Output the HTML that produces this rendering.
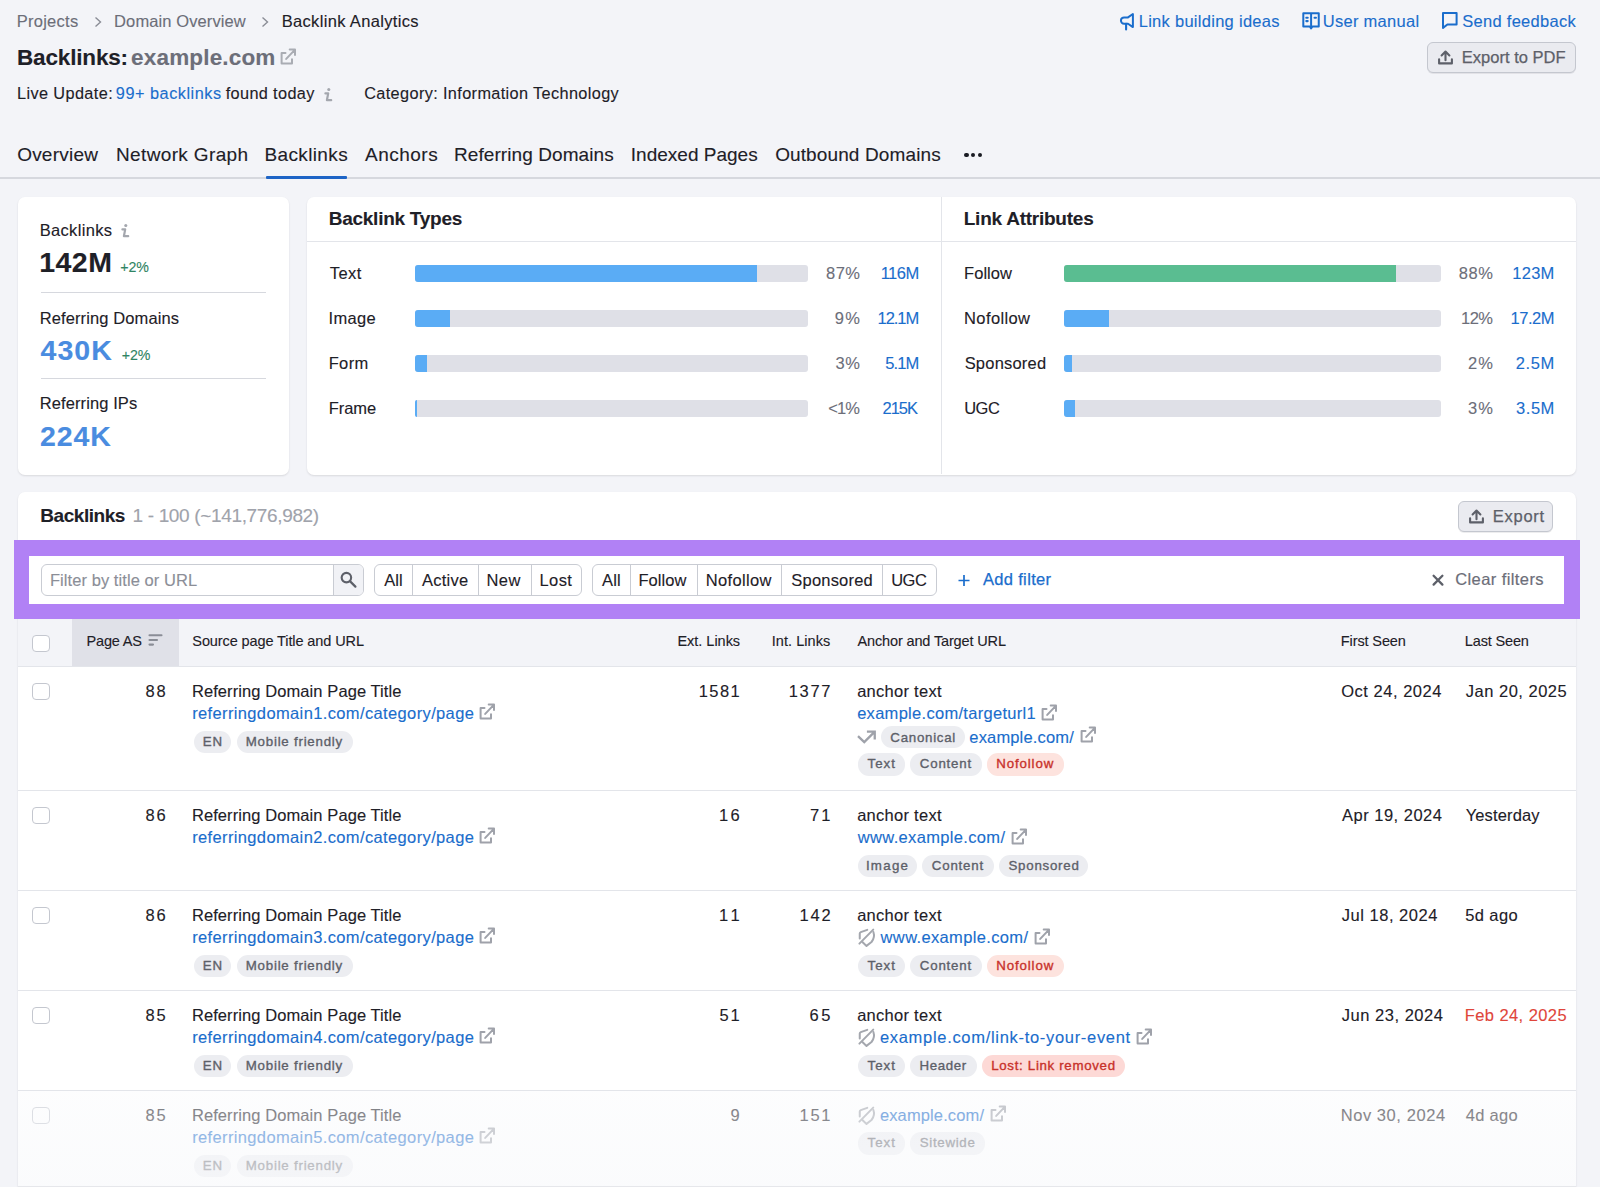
<!DOCTYPE html>
<html><head><meta charset="utf-8"><title>Backlinks</title>
<style>
html,body{margin:0;padding:0;}
body{width:1600px;height:1187px;overflow:hidden;position:relative;background:#f3f4f8;font-family:"Liberation Sans",sans-serif;}
.t{position:absolute;white-space:nowrap;-webkit-text-stroke:0.12px currentColor;}
.r{position:absolute;display:block;}
</style></head><body>
<div class="t" style="left:16.68px;top:11.38px;font-size:16.5px;line-height:21px;color:#6c6e79;letter-spacing:0.276px;">Projects</div>
<svg class="r" style="left:92px;top:15px;" width="12" height="14" viewBox="0 0 12 14"><path d="M3.5 2.5 L8.5 7 L3.5 11.5" fill="none" stroke="#8a8d96" stroke-width="1.4"/></svg>
<div class="t" style="left:114.08px;top:11.38px;font-size:16.5px;line-height:21px;color:#6c6e79;letter-spacing:0.104px;">Domain Overview</div>
<svg class="r" style="left:259px;top:15px;" width="12" height="14" viewBox="0 0 12 14"><path d="M3.5 2.5 L8.5 7 L3.5 11.5" fill="none" stroke="#8a8d96" stroke-width="1.4"/></svg>
<div class="t" style="left:281.68px;top:11.38px;font-size:16.5px;line-height:21px;color:#1e2027;letter-spacing:0.337px;">Backlink Analytics</div>
<div class="t" style="left:17.04px;top:43.70px;font-size:22.5px;line-height:28px;color:#1e2027;font-weight:700;letter-spacing:-0.168px;">Backlinks:</div>
<div class="t" style="left:131.10px;top:43.70px;font-size:22.5px;line-height:28px;color:#6c6e79;font-weight:700;letter-spacing:0.171px;">example.com</div>
<svg class="r" style="left:279.5px;top:48px;" width="17" height="17" viewBox="0 0 17 17"><path d="M5.5 5.1H1.6V15.5H12V11.2" fill="none" stroke="#a9acb3" stroke-width="2" stroke-linecap="round" stroke-linejoin="round"/><path d="M6.2 10.9L15 1.6M9.7 1.6H15V6.9" fill="none" stroke="#a9acb3" stroke-width="2" stroke-linecap="round" stroke-linejoin="round"/></svg>
<div class="t" style="left:17.00px;top:83.35px;font-size:16.3px;line-height:20px;color:#1e2027;letter-spacing:0.386px;">Live Update:</div>
<div class="t" style="left:115.87px;top:83.35px;font-size:16.3px;line-height:20px;color:#1a6dcc;letter-spacing:0.510px;">99+ backlinks</div>
<div class="t" style="left:225.76px;top:83.35px;font-size:16.3px;line-height:20px;color:#1e2027;letter-spacing:0.348px;">found today</div>
<svg class="r" style="left:321.2px;top:86px;" width="13" height="17" viewBox="0 0 13 17"><circle cx="7.8" cy="3.5" r="1.55" fill="#a4a7ae"/><path d="M4.4 7.4H7.2L5.9 14.2H10.2" fill="none" stroke="#a4a7ae" stroke-width="2.2" stroke-linecap="round" stroke-linejoin="round"/></svg>
<div class="t" style="left:364.19px;top:83.35px;font-size:16.3px;line-height:20px;color:#1e2027;letter-spacing:0.367px;">Category: Information Technology</div>
<svg class="r" style="left:1118px;top:12px;" width="18" height="20" viewBox="0 0 18 20"><path d="M6.1 5.4H10L14.9 2V15.1L10 11.75H6.1A3.17 3.17 0 0 1 6.1 5.4Z" fill="none" stroke="#1a6dcc" stroke-width="2" stroke-linejoin="round"/><path d="M8.1 11.9V17.4" stroke="#1a6dcc" stroke-width="2.1" stroke-linecap="round"/></svg>
<div class="t" style="left:1138.68px;top:11.18px;font-size:16.5px;line-height:21px;color:#1a6dcc;letter-spacing:0.283px;">Link building ideas</div>
<svg class="r" style="left:1301px;top:11px;" width="20" height="20" viewBox="0 0 20 20"><path d="M2.3 2.3H17.75V15.5H11.4L10.1 17.4L8.8 15.5H2.3Z" fill="none" stroke="#1a6dcc" stroke-width="2" stroke-linejoin="round"/><path d="M10.1 2.5V16.5" stroke="#1a6dcc" stroke-width="2"/><path d="M5.3 6.75H6.7M5.3 10.1H6.7M13.55 6.75H14.95" stroke="#1a6dcc" stroke-width="2.1" stroke-linecap="round"/></svg>
<div class="t" style="left:1322.76px;top:11.18px;font-size:16.5px;line-height:21px;color:#1a6dcc;letter-spacing:0.284px;">User manual</div>
<svg class="r" style="left:1441px;top:11px;" width="18" height="19" viewBox="0 0 18 19"><path d="M2 2V16.9L6.4 13.5H15.6V2Z" fill="none" stroke="#1a6dcc" stroke-width="2" stroke-linejoin="round"/></svg>
<div class="t" style="left:1462.26px;top:11.18px;font-size:16.5px;line-height:21px;color:#1a6dcc;letter-spacing:0.282px;">Send feedback</div>
<div class="r" style="left:1427px;top:42px;width:149px;height:31.3px;background:#eaebf0;border:1px solid #c4c7cf;border-radius:6px;box-sizing:border-box;box-shadow:0 1px 0 rgba(25,27,35,.08);"></div>
<svg class="r" style="left:1437px;top:49px;" width="17" height="17" viewBox="0 0 17 17"><path d="M8.5 11.3V2.8M4.6 6.4L8.5 2.5L12.4 6.4" fill="none" stroke="#5d6069" stroke-width="2.1" stroke-linecap="round" stroke-linejoin="round"/><path d="M2.1 10.2V14.4H14.9V10.2" fill="none" stroke="#5d6069" stroke-width="2.1" stroke-linecap="round" stroke-linejoin="round"/></svg>
<div class="t" style="left:1461.68px;top:47.28px;font-size:16.5px;line-height:21px;color:#5d6069;letter-spacing:0.030px;-webkit-text-stroke:0.25px #5d6069;">Export to PDF</div>
<div class="t" style="left:17.14px;top:142.91px;font-size:19px;line-height:24px;color:#1e2027;letter-spacing:0.232px;">Overview</div>
<div class="t" style="left:115.98px;top:142.91px;font-size:19px;line-height:24px;color:#1e2027;letter-spacing:0.365px;">Network Graph</div>
<div class="t" style="left:264.48px;top:142.91px;font-size:19px;line-height:24px;color:#1e2027;letter-spacing:0.364px;">Backlinks</div>
<div class="t" style="left:365.00px;top:142.91px;font-size:19px;line-height:24px;color:#1e2027;letter-spacing:0.489px;">Anchors</div>
<div class="t" style="left:453.98px;top:142.91px;font-size:19px;line-height:24px;color:#1e2027;letter-spacing:0.082px;">Referring Domains</div>
<div class="t" style="left:630.79px;top:142.91px;font-size:19px;line-height:24px;color:#1e2027;letter-spacing:0.012px;">Indexed Pages</div>
<div class="t" style="left:775.14px;top:142.91px;font-size:19px;line-height:24px;color:#1e2027;letter-spacing:0.122px;">Outbound Domains</div>
<div class="r" style="left:964.0px;top:152.6px;width:4.7px;height:4.7px;background:#191b23;border-radius:50%;"></div>
<div class="r" style="left:970.8px;top:152.6px;width:4.7px;height:4.7px;background:#191b23;border-radius:50%;"></div>
<div class="r" style="left:977.6px;top:152.6px;width:4.7px;height:4.7px;background:#191b23;border-radius:50%;"></div>
<div class="r" style="left:0px;top:177px;width:1600px;height:1.5px;background:#d6d8de;"></div>
<div class="r" style="left:266px;top:175.5px;width:81px;height:3.2px;background:#1d64c6;border-radius:1px;"></div>
<div class="r" style="left:18px;top:197px;width:271px;height:277.5px;background:#fff;border-radius:7px;box-shadow:0 1px 2px rgba(25,27,35,.12);"></div>
<div class="r" style="left:307px;top:197px;width:1269px;height:277.5px;background:#fff;border-radius:7px;box-shadow:0 1px 2px rgba(25,27,35,.12);"></div>
<div class="r" style="left:941px;top:197px;width:1px;height:277px;background:#e3e5ea;"></div>
<div class="r" style="left:307px;top:240.5px;width:1269px;height:1.2px;background:#e3e5ea;"></div>
<div class="t" style="left:39.68px;top:219.78px;font-size:16.5px;line-height:21px;color:#1e2027;letter-spacing:0.336px;">Backlinks</div>
<svg class="r" style="left:118px;top:222px;" width="13" height="17" viewBox="0 0 13 17"><circle cx="7.8" cy="3.5" r="1.55" fill="#a4a7ae"/><path d="M4.4 7.4H7.2L5.9 14.2H10.2" fill="none" stroke="#a4a7ae" stroke-width="2.2" stroke-linecap="round" stroke-linejoin="round"/></svg>
<div class="t" style="left:39.29px;top:244.12px;font-size:28.5px;line-height:36px;color:#1e2027;font-weight:700;letter-spacing:0.438px;">142M</div>
<div class="t" style="left:120.29px;top:258.08px;font-size:14.2px;line-height:18px;color:#2f8463;letter-spacing:-0.059px;">+2%</div>
<div class="r" style="left:41px;top:291.5px;width:225px;height:1.5px;background:#d6d8de;"></div>
<div class="t" style="left:39.68px;top:307.53px;font-size:16.5px;line-height:21px;color:#1e2027;letter-spacing:0.117px;">Referring Domains</div>
<div class="t" style="left:40.57px;top:331.82px;font-size:28.5px;line-height:36px;color:#4a8ce0;font-weight:700;letter-spacing:1.032px;">430K</div>
<div class="t" style="left:121.79px;top:345.78px;font-size:14.2px;line-height:18px;color:#2f8463;letter-spacing:-0.059px;">+2%</div>
<div class="r" style="left:41px;top:377.5px;width:225px;height:1.5px;background:#d6d8de;"></div>
<div class="t" style="left:39.68px;top:393.48px;font-size:16.5px;line-height:21px;color:#1e2027;letter-spacing:0.102px;">Referring IPs</div>
<div class="t" style="left:40.00px;top:418.12px;font-size:28.5px;line-height:36px;color:#4a8ce0;font-weight:700;letter-spacing:0.889px;">224K</div>
<div class="t" style="left:328.76px;top:207.41px;font-size:19px;line-height:24px;color:#1e2027;font-weight:700;letter-spacing:-0.262px;">Backlink Types</div>
<div class="t" style="left:963.76px;top:207.41px;font-size:19px;line-height:24px;color:#1e2027;font-weight:700;letter-spacing:-0.242px;">Link Attributes</div>
<div class="t" style="left:329.67px;top:262.98px;font-size:16.5px;line-height:21px;color:#1e2027;letter-spacing:0.489px;">Text</div>
<div class="r" style="left:415px;top:264.5px;width:393px;height:17.5px;background:#dfe0e7;border-radius:3px;"></div>
<div class="r" style="left:415px;top:264.5px;width:341.91px;height:17.5px;background:#5aacf5;border-radius:3px 0 0 3px;"></div>
<div class="t" style="left:825.94px;top:262.98px;font-size:16.5px;line-height:21px;color:#6c6e79;letter-spacing:0.519px;">87%</div>
<div class="t" style="left:880.66px;top:262.98px;font-size:16.5px;line-height:21px;color:#1a6dcc;letter-spacing:-0.518px;">116M</div>
<div class="t" style="left:328.51px;top:307.98px;font-size:16.5px;line-height:21px;color:#1e2027;letter-spacing:0.319px;">Image</div>
<div class="r" style="left:415px;top:309.5px;width:393px;height:17.5px;background:#dfe0e7;border-radius:3px;"></div>
<div class="r" style="left:415px;top:309.5px;width:35.37px;height:17.5px;background:#5aacf5;border-radius:3px 0 0 3px;"></div>
<div class="t" style="left:834.66px;top:307.98px;font-size:16.5px;line-height:21px;color:#6c6e79;letter-spacing:1.477px;">9%</div>
<div class="t" style="left:877.56px;top:307.98px;font-size:16.5px;line-height:21px;color:#1a6dcc;letter-spacing:-1.058px;">12.1M</div>
<div class="t" style="left:328.68px;top:352.98px;font-size:16.5px;line-height:21px;color:#1e2027;letter-spacing:0.355px;">Form</div>
<div class="r" style="left:415px;top:354.5px;width:393px;height:17.5px;background:#dfe0e7;border-radius:3px;"></div>
<div class="r" style="left:415px;top:354.5px;width:11.79px;height:17.5px;background:#5aacf5;border-radius:3px 0 0 3px;"></div>
<div class="t" style="left:835.42px;top:352.98px;font-size:16.5px;line-height:21px;color:#6c6e79;letter-spacing:0.712px;">3%</div>
<div class="t" style="left:885.24px;top:352.98px;font-size:16.5px;line-height:21px;color:#1a6dcc;letter-spacing:-0.917px;">5.1M</div>
<div class="t" style="left:328.68px;top:397.98px;font-size:16.5px;line-height:21px;color:#1e2027;letter-spacing:-0.026px;">Frame</div>
<div class="r" style="left:415px;top:399.5px;width:393px;height:17.5px;background:#dfe0e7;border-radius:3px;"></div>
<div class="r" style="left:415px;top:399.5px;width:2.3579999999999997px;height:17.5px;background:#5aacf5;border-radius:3px 0 0 3px;"></div>
<div class="t" style="left:828.27px;top:397.98px;font-size:16.5px;line-height:21px;color:#6c6e79;letter-spacing:-0.896px;">&lt;1%</div>
<div class="t" style="left:882.57px;top:397.98px;font-size:16.5px;line-height:21px;color:#1a6dcc;letter-spacing:-1.046px;">215K</div>
<div class="t" style="left:964.08px;top:262.98px;font-size:16.5px;line-height:21px;color:#1e2027;letter-spacing:0.031px;">Follow</div>
<div class="r" style="left:1064px;top:264.5px;width:377px;height:17.5px;background:#dfe0e7;border-radius:3px;"></div>
<div class="r" style="left:1064px;top:264.5px;width:331.76px;height:17.5px;background:#5abd91;border-radius:3px 0 0 3px;"></div>
<div class="t" style="left:1458.64px;top:262.98px;font-size:16.5px;line-height:21px;color:#6c6e79;letter-spacing:0.619px;">88%</div>
<div class="t" style="left:1512.36px;top:262.98px;font-size:16.5px;line-height:21px;color:#1a6dcc;letter-spacing:0.236px;">123M</div>
<div class="t" style="left:964.08px;top:307.98px;font-size:16.5px;line-height:21px;color:#1e2027;letter-spacing:0.380px;">Nofollow</div>
<div class="r" style="left:1064px;top:309.5px;width:377px;height:17.5px;background:#dfe0e7;border-radius:3px;"></div>
<div class="r" style="left:1064px;top:309.5px;width:45.24px;height:17.5px;background:#5aacf5;border-radius:3px 0 0 3px;"></div>
<div class="t" style="left:1461.06px;top:307.98px;font-size:16.5px;line-height:21px;color:#6c6e79;letter-spacing:-0.592px;">12%</div>
<div class="t" style="left:1510.56px;top:307.98px;font-size:16.5px;line-height:21px;color:#1a6dcc;letter-spacing:-0.508px;">17.2M</div>
<div class="t" style="left:964.66px;top:352.98px;font-size:16.5px;line-height:21px;color:#1e2027;letter-spacing:0.207px;">Sponsored</div>
<div class="r" style="left:1064px;top:354.5px;width:377px;height:17.5px;background:#dfe0e7;border-radius:3px;"></div>
<div class="r" style="left:1064px;top:354.5px;width:7.54px;height:17.5px;background:#5aacf5;border-radius:3px 0 0 3px;"></div>
<div class="t" style="left:1467.88px;top:352.98px;font-size:16.5px;line-height:21px;color:#6c6e79;letter-spacing:1.160px;">2%</div>
<div class="t" style="left:1515.77px;top:352.98px;font-size:16.5px;line-height:21px;color:#1a6dcc;letter-spacing:0.638px;">2.5M</div>
<div class="t" style="left:964.16px;top:397.98px;font-size:16.5px;line-height:21px;color:#1e2027;letter-spacing:-0.508px;">UGC</div>
<div class="r" style="left:1064px;top:399.5px;width:377px;height:17.5px;background:#dfe0e7;border-radius:3px;"></div>
<div class="r" style="left:1064px;top:399.5px;width:11.31px;height:17.5px;background:#5aacf5;border-radius:3px 0 0 3px;"></div>
<div class="t" style="left:1468.12px;top:397.98px;font-size:16.5px;line-height:21px;color:#6c6e79;letter-spacing:0.913px;">3%</div>
<div class="t" style="left:1516.02px;top:397.98px;font-size:16.5px;line-height:21px;color:#1a6dcc;letter-spacing:0.556px;">3.5M</div>
<div class="r" style="left:18px;top:492px;width:1558px;height:720px;background:#fff;border-radius:7px 7px 0 0;box-shadow:0 1px 2px rgba(25,27,35,.12);"></div>
<div class="t" style="left:40.37px;top:504.16px;font-size:19px;line-height:24px;color:#1e2027;font-weight:700;letter-spacing:-0.467px;">Backlinks</div>
<div class="t" style="left:132.57px;top:504.16px;font-size:19px;line-height:24px;color:#a0a3ab;letter-spacing:-0.345px;">1 - 100 (~141,776,982)</div>
<div class="r" style="left:1458px;top:501px;width:95px;height:31.3px;background:#eaebf0;border:1px solid #c4c7cf;border-radius:6px;box-sizing:border-box;box-shadow:0 1px 0 rgba(25,27,35,.08);"></div>
<svg class="r" style="left:1468px;top:508px;" width="17" height="17" viewBox="0 0 17 17"><path d="M8.5 11.3V2.8M4.6 6.4L8.5 2.5L12.4 6.4" fill="none" stroke="#5d6069" stroke-width="2.1" stroke-linecap="round" stroke-linejoin="round"/><path d="M2.1 10.2V14.4H14.9V10.2" fill="none" stroke="#5d6069" stroke-width="2.1" stroke-linecap="round" stroke-linejoin="round"/></svg>
<div class="t" style="left:1492.68px;top:506.28px;font-size:16.5px;line-height:21px;color:#5d6069;letter-spacing:0.760px;-webkit-text-stroke:0.25px #5d6069;">Export</div>
<div class="r" style="left:13.5px;top:540px;width:1566.5px;height:79px;background:#b181f5;"></div>
<div class="r" style="left:29px;top:556px;width:1535px;height:47.7px;background:#fff;"></div>
<div class="r" style="left:41px;top:564px;width:323px;height:32px;background:#fff;border:1px solid #c9ccd3;border-radius:6px;box-sizing:border-box;"></div>
<div class="r" style="left:333px;top:565px;width:30px;height:30px;background:#f1f2f6;border-left:1px solid #c9ccd3;border-radius:0 5px 5px 0;box-sizing:border-box;"></div>
<div class="t" style="left:49.88px;top:570.08px;font-size:16.5px;line-height:21px;color:#8b8e97;letter-spacing:0.073px;">Filter by title or URL</div>
<svg class="r" style="left:340px;top:571px;" width="18" height="17" viewBox="0 0 18 17"><circle cx="6.4" cy="6.6" r="4.75" fill="none" stroke="#5d6069" stroke-width="2.1"/><path d="M9.9 10.1L15.4 15.6" stroke="#5d6069" stroke-width="2.2" stroke-linecap="round"/></svg>
<div class="r" style="left:374px;top:564px;width:207.60000000000002px;height:32px;background:#fff;border:1px solid #c9ccd3;border-radius:6px;box-sizing:border-box;"></div>
<div class="r" style="left:411.6px;top:565px;width:1px;height:30px;background:#c9ccd3;"></div>
<div class="r" style="left:477.7px;top:565px;width:1px;height:30px;background:#c9ccd3;"></div>
<div class="r" style="left:530.8px;top:565px;width:1px;height:30px;background:#c9ccd3;"></div>
<div class="t" style="left:384.20px;top:570.08px;font-size:16.5px;line-height:21px;color:#1e2027;letter-spacing:0.129px;">All</div>
<div class="t" style="left:421.90px;top:570.08px;font-size:16.5px;line-height:21px;color:#1e2027;letter-spacing:0.256px;">Active</div>
<div class="t" style="left:486.38px;top:570.08px;font-size:16.5px;line-height:21px;color:#1e2027;letter-spacing:0.519px;">New</div>
<div class="t" style="left:539.38px;top:570.08px;font-size:16.5px;line-height:21px;color:#1e2027;letter-spacing:0.450px;">Lost</div>
<div class="r" style="left:592px;top:564px;width:344.6px;height:32px;background:#fff;border:1px solid #c9ccd3;border-radius:6px;box-sizing:border-box;"></div>
<div class="r" style="left:629.7px;top:565px;width:1px;height:30px;background:#c9ccd3;"></div>
<div class="r" style="left:696.7px;top:565px;width:1px;height:30px;background:#c9ccd3;"></div>
<div class="r" style="left:781.4px;top:565px;width:1px;height:30px;background:#c9ccd3;"></div>
<div class="r" style="left:881.7px;top:565px;width:1px;height:30px;background:#c9ccd3;"></div>
<div class="t" style="left:602.00px;top:570.08px;font-size:16.5px;line-height:21px;color:#1e2027;letter-spacing:0.129px;">All</div>
<div class="t" style="left:638.48px;top:570.08px;font-size:16.5px;line-height:21px;color:#1e2027;letter-spacing:0.071px;">Follow</div>
<div class="t" style="left:705.78px;top:570.08px;font-size:16.5px;line-height:21px;color:#1e2027;letter-spacing:0.337px;">Nofollow</div>
<div class="t" style="left:791.36px;top:570.08px;font-size:16.5px;line-height:21px;color:#1e2027;letter-spacing:0.194px;">Sponsored</div>
<div class="t" style="left:891.16px;top:570.08px;font-size:16.5px;line-height:21px;color:#1e2027;letter-spacing:-0.458px;">UGC</div>
<svg class="r" style="left:957px;top:574px;" width="14" height="13" viewBox="0 0 14 13"><path d="M7 1V12M1.5 6.5H12.5" stroke="#1a6dcc" stroke-width="1.7"/></svg>
<div class="t" style="left:982.90px;top:569.18px;font-size:16.5px;line-height:21px;color:#1a6dcc;letter-spacing:0.341px;-webkit-text-stroke:0.25px #1a6dcc;">Add filter</div>
<svg class="r" style="left:1430px;top:573px;" width="15" height="15" viewBox="0 0 15 15"><path d="M3.6 2.8L12.4 11.6M12.4 2.8L3.6 11.6" stroke="#5d6069" stroke-width="2.3" stroke-linecap="round"/></svg>
<div class="t" style="left:1455.17px;top:569.18px;font-size:16.5px;line-height:21px;color:#6c6e79;letter-spacing:0.416px;-webkit-text-stroke:0.2px #6c6e79;">Clear filters</div>
<div class="r" style="left:18px;top:619px;width:1558px;height:47px;background:#f3f4f8;"></div>
<div class="r" style="left:72.25px;top:619px;width:106.75px;height:47px;background:#e0e1e8;"></div>
<div class="r" style="left:18px;top:665.5px;width:1558px;height:1px;background:#e3e5ea;"></div>
<div class="r" style="left:32px;top:634.5px;width:17.5px;height:17.5px;background:#fff;border:1px solid #c4c7cf;border-radius:4px;box-sizing:border-box;opacity:1;"></div>
<div class="t" style="left:86.59px;top:631.87px;font-size:14.5px;line-height:18px;color:#1e2027;letter-spacing:-0.182px;">Page AS</div>
<svg class="r" style="left:147px;top:633px;" width="17" height="14" viewBox="0 0 17 14"><path d="M2.5 2.25H14.5M2.5 7H10M2.5 11.6H6" stroke="#8a8d96" stroke-width="2.1" stroke-linecap="round"/></svg>
<div class="t" style="left:192.35px;top:631.87px;font-size:14.5px;line-height:18px;color:#1e2027;letter-spacing:-0.104px;">Source page Title and URL</div>
<div class="t" style="left:677.44px;top:631.87px;font-size:14.5px;line-height:18px;color:#1e2027;letter-spacing:-0.021px;">Ext. Links</div>
<div class="t" style="left:771.70px;top:631.87px;font-size:14.5px;line-height:18px;color:#1e2027;letter-spacing:0.057px;">Int. Links</div>
<div class="t" style="left:857.50px;top:631.87px;font-size:14.5px;line-height:18px;color:#1e2027;letter-spacing:-0.140px;">Anchor and Target URL</div>
<div class="t" style="left:1340.84px;top:631.87px;font-size:14.5px;line-height:18px;color:#1e2027;letter-spacing:-0.113px;">First Seen</div>
<div class="t" style="left:1464.84px;top:631.87px;font-size:14.5px;line-height:18px;color:#1e2027;letter-spacing:-0.153px;">Last Seen</div>
<div class="r" style="left:18px;top:789.5px;width:1558px;height:1px;background:#e3e5ea;"></div>
<div class="r" style="left:32px;top:682.75px;width:17.5px;height:17.5px;background:#fff;border:1px solid #c4c7cf;border-radius:4px;box-sizing:border-box;opacity:1;"></div>
<div class="t" style="left:145.59px;top:681.08px;font-size:16.5px;line-height:21px;color:#1e2027;letter-spacing:1.755px;">88</div>
<div class="t" style="left:191.88px;top:681.08px;font-size:16.5px;line-height:21px;color:#1e2027;letter-spacing:0.090px;">Referring Domain Page Title</div>
<div class="t" style="left:192.13px;top:703.48px;font-size:16.5px;line-height:21px;color:#1a6dcc;letter-spacing:0.367px;">referringdomain1.com/category/page</div>
<svg class="r" style="left:479px;top:703px;" width="17" height="17" viewBox="0 0 17 17"><path d="M5.5 5.1H1.6V15.5H12V11.2" fill="none" stroke="#9fa2aa" stroke-width="2" stroke-linecap="round" stroke-linejoin="round"/><path d="M6.2 10.9L15 1.6M9.7 1.6H15V6.9" fill="none" stroke="#9fa2aa" stroke-width="2" stroke-linecap="round" stroke-linejoin="round"/></svg>
<div class="r" style="left:193.5px;top:730.6px;width:37.75px;height:22px;background:#ecedf1;border-radius:11px;"></div>
<div class="t" style="left:202.64px;top:732.59px;font-size:13.3px;line-height:17px;color:#5d6069;letter-spacing:0.907px;-webkit-text-stroke:0.35px #5d6069;">EN</div>
<div class="r" style="left:236.5px;top:730.6px;width:116.3px;height:22px;background:#ecedf1;border-radius:11px;"></div>
<div class="t" style="left:245.74px;top:732.59px;font-size:13.3px;line-height:17px;color:#5d6069;letter-spacing:0.770px;-webkit-text-stroke:0.35px #5d6069;">Mobile friendly</div>
<div class="t" style="left:698.76px;top:681.08px;font-size:16.5px;line-height:21px;color:#1e2027;letter-spacing:1.422px;">1581</div>
<div class="t" style="left:788.76px;top:681.08px;font-size:16.5px;line-height:21px;color:#1e2027;letter-spacing:1.683px;">1377</div>
<div class="t" style="left:1341.26px;top:681.08px;font-size:16.5px;line-height:21px;color:#1e2027;letter-spacing:0.517px;">Oct 24, 2024</div>
<div class="t" style="left:1465.75px;top:681.08px;font-size:16.5px;line-height:21px;color:#1e2027;letter-spacing:0.503px;">Jan 20, 2025</div>
<div class="t" style="left:857.14px;top:681.08px;font-size:16.5px;line-height:21px;color:#1e2027;letter-spacing:0.275px;">anchor text</div>
<div class="t" style="left:857.14px;top:703.48px;font-size:16.5px;line-height:21px;color:#1a6dcc;letter-spacing:0.294px;">example.com/targeturl1</div>
<svg class="r" style="left:1041px;top:703.6999999999999px;" width="17" height="17" viewBox="0 0 17 17"><path d="M5.5 5.1H1.6V15.5H12V11.2" fill="none" stroke="#9fa2aa" stroke-width="2" stroke-linecap="round" stroke-linejoin="round"/><path d="M6.2 10.9L15 1.6M9.7 1.6H15V6.9" fill="none" stroke="#9fa2aa" stroke-width="2" stroke-linecap="round" stroke-linejoin="round"/></svg>
<svg class="r" style="left:856px;top:729px;" width="20" height="15" viewBox="0 0 20 15"><path d="M2 7.1L8.25 13.1L18.75 2.6M10.9 2.6H18.75V10.5" fill="none" stroke="#9fa2aa" stroke-width="2.3" stroke-linejoin="miter"/></svg>
<div class="r" style="left:880.5px;top:726.25px;width:84px;height:22.2px;background:#ecedf1;border-radius:11px;"></div>
<div class="t" style="left:890.34px;top:729.09px;font-size:13.3px;line-height:17px;color:#5d6069;letter-spacing:0.726px;-webkit-text-stroke:0.35px #5d6069;">Canonical</div>
<div class="t" style="left:969.34px;top:726.58px;font-size:16.5px;line-height:21px;color:#1a6dcc;letter-spacing:0.154px;">example.com/</div>
<svg class="r" style="left:1079.5px;top:725.5px;" width="17" height="17" viewBox="0 0 17 17"><path d="M5.5 5.1H1.6V15.5H12V11.2" fill="none" stroke="#9fa2aa" stroke-width="2" stroke-linecap="round" stroke-linejoin="round"/><path d="M6.2 10.9L15 1.6M9.7 1.6H15V6.9" fill="none" stroke="#9fa2aa" stroke-width="2" stroke-linecap="round" stroke-linejoin="round"/></svg>
<div class="r" style="left:857.8px;top:753px;width:47px;height:22.5px;background:#ecedf1;border-radius:11px;"></div>
<div class="t" style="left:867.58px;top:755.39px;font-size:13.3px;line-height:17px;color:#5d6069;letter-spacing:0.964px;-webkit-text-stroke:0.35px #5d6069;">Text</div>
<div class="r" style="left:909.8px;top:753px;width:72px;height:22.5px;background:#ecedf1;border-radius:11px;"></div>
<div class="t" style="left:919.84px;top:755.39px;font-size:13.3px;line-height:17px;color:#5d6069;letter-spacing:0.797px;-webkit-text-stroke:0.35px #5d6069;">Content</div>
<div class="r" style="left:986.8px;top:753px;width:77px;height:22.5px;background:#fde3de;border-radius:11px;"></div>
<div class="t" style="left:996.19px;top:755.39px;font-size:13.3px;line-height:17px;color:#c8312a;letter-spacing:0.870px;-webkit-text-stroke:0.35px #c8312a;">Nofollow</div>
<div class="r" style="left:18px;top:889.5px;width:1558px;height:1px;background:#e3e5ea;"></div>
<div class="r" style="left:32px;top:806.75px;width:17.5px;height:17.5px;background:#fff;border:1px solid #c4c7cf;border-radius:4px;box-sizing:border-box;opacity:1;"></div>
<div class="t" style="left:145.59px;top:805.08px;font-size:16.5px;line-height:21px;color:#1e2027;letter-spacing:1.755px;">86</div>
<div class="t" style="left:191.88px;top:805.08px;font-size:16.5px;line-height:21px;color:#1e2027;letter-spacing:0.090px;">Referring Domain Page Title</div>
<div class="t" style="left:192.13px;top:827.48px;font-size:16.5px;line-height:21px;color:#1a6dcc;letter-spacing:0.367px;">referringdomain2.com/category/page</div>
<svg class="r" style="left:479px;top:827px;" width="17" height="17" viewBox="0 0 17 17"><path d="M5.5 5.1H1.6V15.5H12V11.2" fill="none" stroke="#9fa2aa" stroke-width="2" stroke-linecap="round" stroke-linejoin="round"/><path d="M6.2 10.9L15 1.6M9.7 1.6H15V6.9" fill="none" stroke="#9fa2aa" stroke-width="2" stroke-linecap="round" stroke-linejoin="round"/></svg>
<div class="t" style="left:719.06px;top:805.08px;font-size:16.5px;line-height:21px;color:#1e2027;letter-spacing:2.282px;">16</div>
<div class="t" style="left:810.12px;top:805.08px;font-size:16.5px;line-height:21px;color:#1e2027;letter-spacing:2.003px;">71</div>
<div class="t" style="left:1342.00px;top:805.08px;font-size:16.5px;line-height:21px;color:#1e2027;letter-spacing:0.495px;">Apr 19, 2024</div>
<div class="t" style="left:1465.67px;top:805.08px;font-size:16.5px;line-height:21px;color:#1e2027;letter-spacing:0.133px;">Yesterday</div>
<div class="t" style="left:857.14px;top:805.08px;font-size:16.5px;line-height:21px;color:#1e2027;letter-spacing:0.275px;">anchor text</div>
<div class="t" style="left:857.80px;top:827.48px;font-size:16.5px;line-height:21px;color:#1a6dcc;letter-spacing:0.337px;">www.example.com/</div>
<svg class="r" style="left:1011px;top:827.6999999999999px;" width="17" height="17" viewBox="0 0 17 17"><path d="M5.5 5.1H1.6V15.5H12V11.2" fill="none" stroke="#9fa2aa" stroke-width="2" stroke-linecap="round" stroke-linejoin="round"/><path d="M6.2 10.9L15 1.6M9.7 1.6H15V6.9" fill="none" stroke="#9fa2aa" stroke-width="2" stroke-linecap="round" stroke-linejoin="round"/></svg>
<div class="r" style="left:857.8px;top:854.4999999999999px;width:59px;height:22.5px;background:#ecedf1;border-radius:11px;"></div>
<div class="t" style="left:865.90px;top:856.89px;font-size:13.3px;line-height:17px;color:#5d6069;letter-spacing:1.289px;-webkit-text-stroke:0.35px #5d6069;">Image</div>
<div class="r" style="left:921.8px;top:854.4999999999999px;width:72px;height:22.5px;background:#ecedf1;border-radius:11px;"></div>
<div class="t" style="left:931.84px;top:856.89px;font-size:13.3px;line-height:17px;color:#5d6069;letter-spacing:0.797px;-webkit-text-stroke:0.35px #5d6069;">Content</div>
<div class="r" style="left:998.8px;top:854.4999999999999px;width:89.5px;height:22.5px;background:#ecedf1;border-radius:11px;"></div>
<div class="t" style="left:1008.45px;top:856.89px;font-size:13.3px;line-height:17px;color:#5d6069;letter-spacing:0.761px;-webkit-text-stroke:0.35px #5d6069;">Sponsored</div>
<div class="r" style="left:18px;top:989.5px;width:1558px;height:1px;background:#e3e5ea;"></div>
<div class="r" style="left:32px;top:906.75px;width:17.5px;height:17.5px;background:#fff;border:1px solid #c4c7cf;border-radius:4px;box-sizing:border-box;opacity:1;"></div>
<div class="t" style="left:145.59px;top:905.08px;font-size:16.5px;line-height:21px;color:#1e2027;letter-spacing:1.755px;">86</div>
<div class="t" style="left:191.88px;top:905.08px;font-size:16.5px;line-height:21px;color:#1e2027;letter-spacing:0.090px;">Referring Domain Page Title</div>
<div class="t" style="left:192.13px;top:927.48px;font-size:16.5px;line-height:21px;color:#1a6dcc;letter-spacing:0.367px;">referringdomain3.com/category/page</div>
<svg class="r" style="left:479px;top:927px;" width="17" height="17" viewBox="0 0 17 17"><path d="M5.5 5.1H1.6V15.5H12V11.2" fill="none" stroke="#9fa2aa" stroke-width="2" stroke-linecap="round" stroke-linejoin="round"/><path d="M6.2 10.9L15 1.6M9.7 1.6H15V6.9" fill="none" stroke="#9fa2aa" stroke-width="2" stroke-linecap="round" stroke-linejoin="round"/></svg>
<div class="r" style="left:193.5px;top:954.6px;width:37.75px;height:22px;background:#ecedf1;border-radius:11px;"></div>
<div class="t" style="left:202.64px;top:956.59px;font-size:13.3px;line-height:17px;color:#5d6069;letter-spacing:0.907px;-webkit-text-stroke:0.35px #5d6069;">EN</div>
<div class="r" style="left:236.5px;top:954.6px;width:116.3px;height:22px;background:#ecedf1;border-radius:11px;"></div>
<div class="t" style="left:245.74px;top:956.59px;font-size:13.3px;line-height:17px;color:#5d6069;letter-spacing:0.770px;-webkit-text-stroke:0.35px #5d6069;">Mobile friendly</div>
<div class="t" style="left:719.01px;top:905.08px;font-size:16.5px;line-height:21px;color:#1e2027;letter-spacing:3.652px;">11</div>
<div class="t" style="left:799.46px;top:905.08px;font-size:16.5px;line-height:21px;color:#1e2027;letter-spacing:1.795px;">142</div>
<div class="t" style="left:1341.75px;top:905.08px;font-size:16.5px;line-height:21px;color:#1e2027;letter-spacing:0.521px;">Jul 18, 2024</div>
<div class="t" style="left:1465.34px;top:905.08px;font-size:16.5px;line-height:21px;color:#1e2027;letter-spacing:0.366px;">5d ago</div>
<div class="t" style="left:857.14px;top:905.08px;font-size:16.5px;line-height:21px;color:#1e2027;letter-spacing:0.275px;">anchor text</div>
<svg class="r" style="left:850px;top:919.9999999999999px;" width="28" height="28" viewBox="0 0 28 28"><path d="M9.75 18.4V13.6Q9.75 12.6 10.8 12.1L17.25 9.9" fill="none" stroke="#a4a7ae" stroke-width="2" stroke-linecap="round"/><path d="M9.4 23.6L23.25 9.6" fill="none" stroke="#a4a7ae" stroke-width="2" stroke-linecap="round"/><path d="M23.4 12Q25.2 17.5 21.5 22L16.5 25.9L12.4 22.1" fill="none" stroke="#a4a7ae" stroke-width="2" stroke-linecap="round" stroke-linejoin="round"/></svg>
<div class="t" style="left:880.60px;top:927.48px;font-size:16.5px;line-height:21px;color:#1a6dcc;letter-spacing:0.350px;">www.example.com/</div>
<svg class="r" style="left:1034px;top:927.6999999999999px;" width="17" height="17" viewBox="0 0 17 17"><path d="M5.5 5.1H1.6V15.5H12V11.2" fill="none" stroke="#9fa2aa" stroke-width="2" stroke-linecap="round" stroke-linejoin="round"/><path d="M6.2 10.9L15 1.6M9.7 1.6H15V6.9" fill="none" stroke="#9fa2aa" stroke-width="2" stroke-linecap="round" stroke-linejoin="round"/></svg>
<div class="r" style="left:857.8px;top:954.4999999999999px;width:47px;height:22.5px;background:#ecedf1;border-radius:11px;"></div>
<div class="t" style="left:867.58px;top:956.89px;font-size:13.3px;line-height:17px;color:#5d6069;letter-spacing:0.964px;-webkit-text-stroke:0.35px #5d6069;">Text</div>
<div class="r" style="left:909.8px;top:954.4999999999999px;width:72px;height:22.5px;background:#ecedf1;border-radius:11px;"></div>
<div class="t" style="left:919.84px;top:956.89px;font-size:13.3px;line-height:17px;color:#5d6069;letter-spacing:0.797px;-webkit-text-stroke:0.35px #5d6069;">Content</div>
<div class="r" style="left:986.8px;top:954.4999999999999px;width:77px;height:22.5px;background:#fde3de;border-radius:11px;"></div>
<div class="t" style="left:996.19px;top:956.89px;font-size:13.3px;line-height:17px;color:#c8312a;letter-spacing:0.870px;-webkit-text-stroke:0.35px #c8312a;">Nofollow</div>
<div class="r" style="left:18px;top:1089.5px;width:1558px;height:1px;background:#e3e5ea;"></div>
<div class="r" style="left:32px;top:1006.75px;width:17.5px;height:17.5px;background:#fff;border:1px solid #c4c7cf;border-radius:4px;box-sizing:border-box;opacity:1;"></div>
<div class="t" style="left:145.59px;top:1005.08px;font-size:16.5px;line-height:21px;color:#1e2027;letter-spacing:1.755px;">85</div>
<div class="t" style="left:191.88px;top:1005.08px;font-size:16.5px;line-height:21px;color:#1e2027;letter-spacing:0.090px;">Referring Domain Page Title</div>
<div class="t" style="left:192.13px;top:1027.48px;font-size:16.5px;line-height:21px;color:#1a6dcc;letter-spacing:0.367px;">referringdomain4.com/category/page</div>
<svg class="r" style="left:479px;top:1027px;" width="17" height="17" viewBox="0 0 17 17"><path d="M5.5 5.1H1.6V15.5H12V11.2" fill="none" stroke="#9fa2aa" stroke-width="2" stroke-linecap="round" stroke-linejoin="round"/><path d="M6.2 10.9L15 1.6M9.7 1.6H15V6.9" fill="none" stroke="#9fa2aa" stroke-width="2" stroke-linecap="round" stroke-linejoin="round"/></svg>
<div class="r" style="left:193.5px;top:1054.6px;width:37.75px;height:22px;background:#ecedf1;border-radius:11px;"></div>
<div class="t" style="left:202.64px;top:1056.59px;font-size:13.3px;line-height:17px;color:#5d6069;letter-spacing:0.907px;-webkit-text-stroke:0.35px #5d6069;">EN</div>
<div class="r" style="left:236.5px;top:1054.6px;width:116.3px;height:22px;background:#ecedf1;border-radius:11px;"></div>
<div class="t" style="left:245.74px;top:1056.59px;font-size:13.3px;line-height:17px;color:#5d6069;letter-spacing:0.770px;-webkit-text-stroke:0.35px #5d6069;">Mobile friendly</div>
<div class="t" style="left:719.59px;top:1005.08px;font-size:16.5px;line-height:21px;color:#1e2027;letter-spacing:1.838px;">51</div>
<div class="t" style="left:809.48px;top:1005.08px;font-size:16.5px;line-height:21px;color:#1e2027;letter-spacing:2.570px;">65</div>
<div class="t" style="left:1341.75px;top:1005.08px;font-size:16.5px;line-height:21px;color:#1e2027;letter-spacing:0.526px;">Jun 23, 2024</div>
<div class="t" style="left:1464.68px;top:1005.08px;font-size:16.5px;line-height:21px;color:#e0453a;letter-spacing:0.428px;">Feb 24, 2025</div>
<div class="t" style="left:857.14px;top:1005.08px;font-size:16.5px;line-height:21px;color:#1e2027;letter-spacing:0.275px;">anchor text</div>
<svg class="r" style="left:850px;top:1020.0px;" width="28" height="28" viewBox="0 0 28 28"><path d="M9.75 18.4V13.6Q9.75 12.6 10.8 12.1L17.25 9.9" fill="none" stroke="#a4a7ae" stroke-width="2" stroke-linecap="round"/><path d="M9.4 23.6L23.25 9.6" fill="none" stroke="#a4a7ae" stroke-width="2" stroke-linecap="round"/><path d="M23.4 12Q25.2 17.5 21.5 22L16.5 25.9L12.4 22.1" fill="none" stroke="#a4a7ae" stroke-width="2" stroke-linecap="round" stroke-linejoin="round"/></svg>
<div class="t" style="left:879.94px;top:1027.48px;font-size:16.5px;line-height:21px;color:#1a6dcc;letter-spacing:0.691px;">example.com/link-to-your-event</div>
<svg class="r" style="left:1136px;top:1027.7px;" width="17" height="17" viewBox="0 0 17 17"><path d="M5.5 5.1H1.6V15.5H12V11.2" fill="none" stroke="#9fa2aa" stroke-width="2" stroke-linecap="round" stroke-linejoin="round"/><path d="M6.2 10.9L15 1.6M9.7 1.6H15V6.9" fill="none" stroke="#9fa2aa" stroke-width="2" stroke-linecap="round" stroke-linejoin="round"/></svg>
<div class="r" style="left:857.8px;top:1054.5px;width:47px;height:22.5px;background:#ecedf1;border-radius:11px;"></div>
<div class="t" style="left:867.58px;top:1056.89px;font-size:13.3px;line-height:17px;color:#5d6069;letter-spacing:0.964px;-webkit-text-stroke:0.35px #5d6069;">Text</div>
<div class="r" style="left:909.8px;top:1054.5px;width:67px;height:22.5px;background:#ecedf1;border-radius:11px;"></div>
<div class="t" style="left:919.49px;top:1056.89px;font-size:13.3px;line-height:17px;color:#5d6069;letter-spacing:0.628px;-webkit-text-stroke:0.35px #5d6069;">Header</div>
<div class="r" style="left:981.8px;top:1054.5px;width:143px;height:22.5px;background:#fdd9d6;border-radius:11px;"></div>
<div class="t" style="left:991.24px;top:1056.89px;font-size:13.3px;line-height:17px;color:#c8312a;letter-spacing:0.675px;-webkit-text-stroke:0.35px #c8312a;">Lost: Link removed</div>
<div class="r" style="left:32px;top:1106.75px;width:17.5px;height:17.5px;background:#fff;border:1px solid #c4c7cf;border-radius:4px;box-sizing:border-box;opacity:1;"></div>
<div class="t" style="left:145.59px;top:1105.08px;font-size:16.5px;line-height:21px;color:#1e2027;letter-spacing:1.755px;">85</div>
<div class="t" style="left:191.88px;top:1105.08px;font-size:16.5px;line-height:21px;color:#1e2027;letter-spacing:0.090px;">Referring Domain Page Title</div>
<div class="t" style="left:192.13px;top:1127.48px;font-size:16.5px;line-height:21px;color:#1a6dcc;letter-spacing:0.367px;">referringdomain5.com/category/page</div>
<svg class="r" style="left:479px;top:1127px;" width="17" height="17" viewBox="0 0 17 17"><path d="M5.5 5.1H1.6V15.5H12V11.2" fill="none" stroke="#9fa2aa" stroke-width="2" stroke-linecap="round" stroke-linejoin="round"/><path d="M6.2 10.9L15 1.6M9.7 1.6H15V6.9" fill="none" stroke="#9fa2aa" stroke-width="2" stroke-linecap="round" stroke-linejoin="round"/></svg>
<div class="r" style="left:193.5px;top:1154.6px;width:37.75px;height:22px;background:#ecedf1;border-radius:11px;"></div>
<div class="t" style="left:202.64px;top:1156.59px;font-size:13.3px;line-height:17px;color:#5d6069;letter-spacing:0.907px;-webkit-text-stroke:0.35px #5d6069;">EN</div>
<div class="r" style="left:236.5px;top:1154.6px;width:116.3px;height:22px;background:#ecedf1;border-radius:11px;"></div>
<div class="t" style="left:245.74px;top:1156.59px;font-size:13.3px;line-height:17px;color:#5d6069;letter-spacing:0.770px;-webkit-text-stroke:0.35px #5d6069;">Mobile friendly</div>
<div class="t" style="left:730.59px;top:1105.08px;font-size:16.5px;line-height:21px;color:#1e2027;">9</div>
<div class="t" style="left:799.46px;top:1105.08px;font-size:16.5px;line-height:21px;color:#1e2027;letter-spacing:1.754px;">151</div>
<div class="t" style="left:1340.68px;top:1105.08px;font-size:16.5px;line-height:21px;color:#1e2027;letter-spacing:0.569px;">Nov 30, 2024</div>
<div class="t" style="left:1465.67px;top:1105.08px;font-size:16.5px;line-height:21px;color:#1e2027;letter-spacing:0.300px;">4d ago</div>
<svg class="r" style="left:850px;top:1097.6px;" width="28" height="28" viewBox="0 0 28 28"><path d="M9.75 18.4V13.6Q9.75 12.6 10.8 12.1L17.25 9.9" fill="none" stroke="#a4a7ae" stroke-width="2" stroke-linecap="round"/><path d="M9.4 23.6L23.25 9.6" fill="none" stroke="#a4a7ae" stroke-width="2" stroke-linecap="round"/><path d="M23.4 12Q25.2 17.5 21.5 22L16.5 25.9L12.4 22.1" fill="none" stroke="#a4a7ae" stroke-width="2" stroke-linecap="round" stroke-linejoin="round"/></svg>
<div class="t" style="left:879.94px;top:1105.08px;font-size:16.5px;line-height:21px;color:#1a6dcc;letter-spacing:0.122px;">example.com/</div>
<svg class="r" style="left:990px;top:1105.3px;" width="17" height="17" viewBox="0 0 17 17"><path d="M5.5 5.1H1.6V15.5H12V11.2" fill="none" stroke="#9fa2aa" stroke-width="2" stroke-linecap="round" stroke-linejoin="round"/><path d="M6.2 10.9L15 1.6M9.7 1.6H15V6.9" fill="none" stroke="#9fa2aa" stroke-width="2" stroke-linecap="round" stroke-linejoin="round"/></svg>
<div class="r" style="left:857.8px;top:1132.1px;width:47px;height:22.5px;background:#ecedf1;border-radius:11px;"></div>
<div class="t" style="left:867.58px;top:1134.49px;font-size:13.3px;line-height:17px;color:#5d6069;letter-spacing:0.964px;-webkit-text-stroke:0.35px #5d6069;">Text</div>
<div class="r" style="left:909.8px;top:1132.1px;width:75px;height:22.5px;background:#ecedf1;border-radius:11px;"></div>
<div class="t" style="left:919.70px;top:1134.49px;font-size:13.3px;line-height:17px;color:#5d6069;letter-spacing:0.694px;-webkit-text-stroke:0.35px #5d6069;">Sitewide</div>
<div class="r" style="left:18px;top:1091px;width:1558px;height:96px;background:linear-gradient(rgba(249,250,252,0.40),rgba(248,249,251,0.68));"></div>
<div class="r" style="left:18px;top:1186px;width:1558px;height:1px;background:#e6e7eb;"></div>
</body></html>
